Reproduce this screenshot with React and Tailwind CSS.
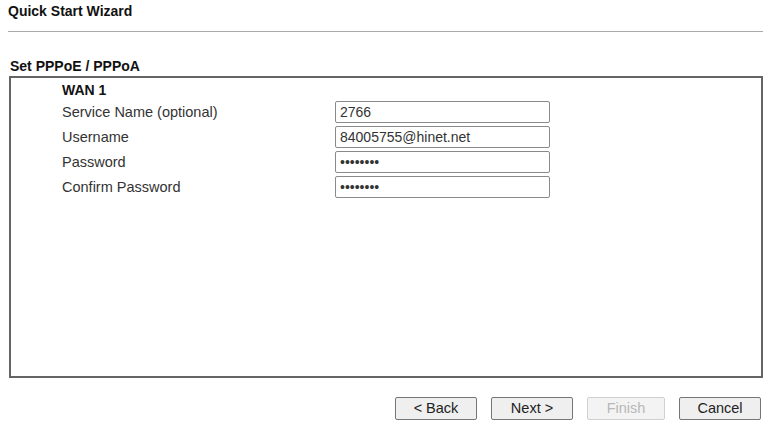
import React from 'react';

const fields = [
  { label: 'Service Name (optional)', value: '2766', type: 'text' },
  { label: 'Username', value: '84005755@hinet.net', type: 'text' },
  { label: 'Password', value: '12345678', type: 'password' },
  { label: 'Confirm Password', value: '12345678', type: 'password' },
];

const WizardButton = ({ children, disabled }) => (
  <button
    type="button"
    disabled={disabled}
    className={
      disabled
        ? 'h-[23px] w-[78px] rounded-[2px] border border-[#d0d0d0] bg-[#f3f3f3] text-[14.5px] leading-none text-[#b8b8b8]'
        : 'h-[23px] w-[82px] rounded-[2px] border border-[#767676] bg-[#efefef] text-[14.5px] leading-none text-[#222]'
    }
  >
    {children}
  </button>
);

const App = () => {
  return (
    <div className="h-[423px] w-[767px] bg-white font-['Liberation_Sans',Arial,sans-serif] text-[#333]">
      <div className="pl-2 pr-1 pt-[3px]">
        <h1 className="text-[14px] font-bold leading-[17px] text-[#111]">Quick Start Wizard</h1>
        <div className="mt-[11px] h-px bg-[#a9a9a9]" />
      </div>

      <div className="mt-[26px] pl-[10px] text-[14px] font-bold leading-[17px] text-[#111]">Set PPPoE / PPPoA</div>

      <div className="ml-[9px] mr-[4px] mt-[1px] h-[302px] border-2 border-[#646464] bg-white">
        <div className="pl-[51px] pt-[4px]">
          <div className="text-[14px] font-bold leading-[17px] text-[#111]">WAN 1</div>
          <div className="flex flex-col gap-[3px] pt-[2px]">
            {fields.map(f => (
              <div key={f.label} className="flex items-center">
                <div className="w-[273px] text-[14.5px] leading-[22px] text-[#333]">{f.label}</div>
                <input
                  type={f.type}
                  defaultValue={f.value}
                  className="h-[22px] w-[215px] rounded-[2px] border border-[#8a8a8a] bg-white px-[4px] text-[14px] text-[#333] outline-none"
                />
              </div>
            ))}
          </div>
        </div>
      </div>

      <div className="mt-[19px] flex justify-end gap-[14px] pr-[6px]">
        <WizardButton>&lt; Back</WizardButton>
        <WizardButton>Next &gt;</WizardButton>
        <WizardButton disabled>Finish</WizardButton>
        <WizardButton>Cancel</WizardButton>
      </div>
    </div>
  );
};

export default App;
